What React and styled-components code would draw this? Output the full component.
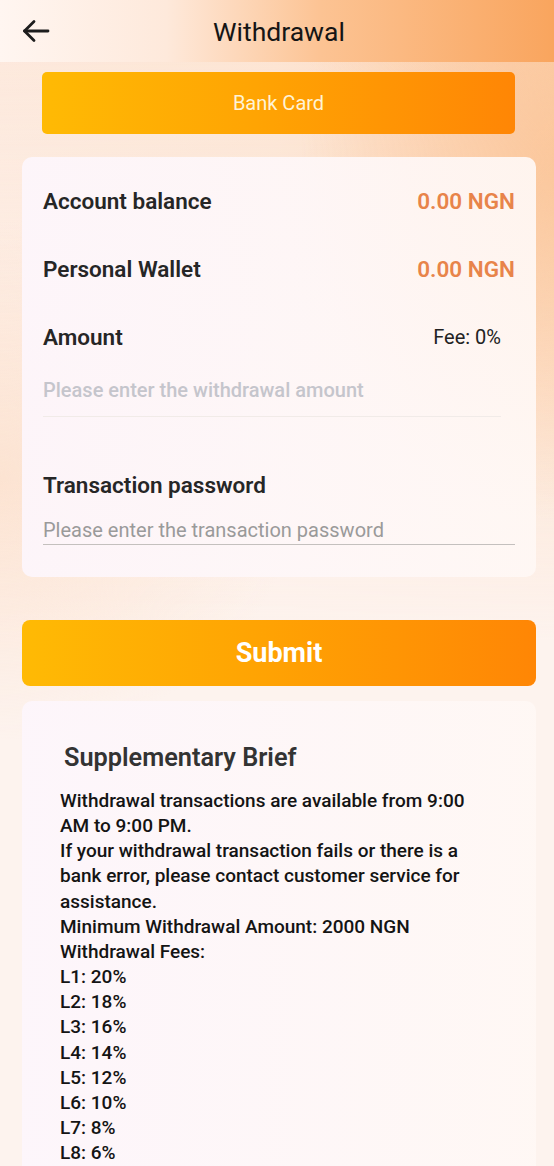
import React from 'react';
import styled, { createGlobalStyle } from 'styled-components';

const GlobalStyle = createGlobalStyle`
  * { box-sizing: border-box; }
  html, body {
    margin: 0;
    padding: 0;
  }
  body {
    font-family: Roboto, "Liberation Sans", Arial, sans-serif;
    background-color: #fdf1ea;
  }
`;

const Page = styled.div`
  width: 554px;
  min-height: 1166px;
  overflow: hidden;
  background:
    radial-gradient(ellipse 260px 360px at 560px 160px, rgba(251, 196, 150, 0.85), rgba(251, 196, 150, 0) 100%),
    radial-gradient(ellipse 300px 260px at 0px 480px, rgba(252, 222, 200, 0.7), rgba(252, 222, 200, 0) 100%),
    linear-gradient(180deg, rgba(253, 242, 235, 0) 0px, #fdf3ee 640px),
    linear-gradient(90deg, #fde8db 0%, #fde3d0 50%, #fcd0ad 100%);
`;

const Header = styled.header`
  height: 62px;
  display: flex;
  align-items: center;
  justify-content: center;
  position: relative;
  background: linear-gradient(90deg, #fff6f1 0%, #fee9db 30%, #fcc393 58%, #f9a55e 100%);
`;

const BackButton = styled.button`
  position: absolute;
  left: 20px;
  top: 15px;
  width: 32px;
  height: 32px;
  padding: 0;
  border: none;
  background: none;
  display: flex;
  align-items: center;
  justify-content: center;
`;

const Title = styled.h1`
  margin: 0;
  font-size: 26.5px;
  font-weight: 400;
  color: #151515;
  padding-left: 4px;
`;

const GradientButton = styled.button`
  display: flex;
  align-items: center;
  justify-content: center;
  border: none;
  font-family: inherit;
  color: ${p => (p.$light ? '#fff3d6' : '#ffffff')};
  font-size: ${p => (p.$big ? '27px' : '20px')};
  font-weight: ${p => (p.$big ? 700 : 400)};
  height: ${p => p.$h}px;
  border-radius: ${p => p.$r}px;
  background: linear-gradient(90deg, #ffba04 0%, #ffa403 45%, #ff8605 100%);
`;

const TabButton = styled(GradientButton)`
  margin: 10px 39px 0 42px;
  width: 473px;
`;

const SubmitButton = styled(GradientButton)`
  margin: 43px 0 0 22px;
  width: 514px;
`;

const Card = styled.section`
  margin: ${p => p.$top}px 0 0 22px;
  width: 514px;
  border-radius: 10px;
  background: linear-gradient(90deg, rgba(253, 246, 252, 0.92) 0%, rgba(255, 248, 245, 0.92) 100%);
`;

const FormCard = styled(Card)`
  padding: 10px 21px 32px 21px;
`;

const Row = styled.div`
  height: ${p => p.$h || 68}px;
  display: flex;
  align-items: center;
  justify-content: space-between;
  padding-right: ${p => p.$pr || 0}px;
`;

const Label = styled.span`
  font-size: 22.5px;
  font-weight: 600;
  color: #262626;
`;

const Value = styled.span`
  font-size: 22.5px;
  font-weight: 600;
  color: #e8844a;
`;

const Fee = styled.span`
  font-size: 20px;
  color: #222;
`;

const Input = styled.input`
  display: block;
  width: ${p => p.$w}px;
  height: ${p => p.$h}px;
  margin-top: ${p => p.$mt || 0}px;
  padding: 0 0 ${p => p.$pb || 0}px 0;
  border: none;
  border-bottom: 1px solid ${p => p.$line};
  background: transparent;
  font-family: inherit;
  font-size: 20px;
  font-weight: ${p => p.$weight || 400};
  outline: none;
  &::placeholder {
    color: ${p => p.$ph};
    opacity: 1;
  }
`;

const PasswordLabel = styled(Row)`
  margin-top: 51px;
  height: 34px;
`;

const BriefCard = styled(Card)`
  padding: 41px 60px 30px 38px;
`;

const BriefTitle = styled.h2`
  margin: 0 0 14px 4px;
  font-size: 25.3px;
  line-height: 32px;
  font-weight: 600;
  color: #333;
`;

const BriefText = styled.p`
  margin: 0;
  font-size: 19px;
  line-height: 25.15px;
  font-weight: 500;
  color: #141414;
`;

const BackIcon = () => (
  <svg width="30" height="30" viewBox="0 0 30 30" fill="none" stroke="#1d1d1d" strokeWidth="2.8" strokeLinecap="round" strokeLinejoin="round">
    <path d="M27 15H3.5" />
    <path d="M13 5.5L3.5 15L13 24.5" />
  </svg>
);

const fees = ['L1: 20%', 'L2: 18%', 'L3: 16%', 'L4: 14%', 'L5: 12%', 'L6: 10%', 'L7: 8%', 'L8: 6%'];

export default function App() {
  return (
    <Page>
      <GlobalStyle />
      <Header>
        <BackButton aria-label="back"><BackIcon /></BackButton>
        <Title>Withdrawal</Title>
      </Header>

      <TabButton $h={62} $r={5} $light>Bank Card</TabButton>

      <FormCard $top={23}>
        <Row>
          <Label>Account balance</Label>
          <Value>0.00 NGN</Value>
        </Row>
        <Row>
          <Label>Personal Wallet</Label>
          <Value>0.00 NGN</Value>
        </Row>
        <Row $pr={14}>
          <Label>Amount</Label>
          <Fee>Fee: 0%</Fee>
        </Row>
        <Input
          placeholder="Please enter the withdrawal amount"
          $w={458}
          $h={46}
          $pb={8}
          $weight={500}
          $line="#f1ebe8"
          $ph="#c5c5cc"
        />
        <PasswordLabel>
          <Label>Transaction password</Label>
        </PasswordLabel>
        <Input
          type="password"
          placeholder="Please enter the transaction password"
          $w={472}
          $h={30}
          $mt={13}
          $line="#c4c0be"
          $ph="#9a9a9a"
        />
      </FormCard>

      <SubmitButton $h={66} $r={8} $big>Submit</SubmitButton>

      <BriefCard $top={15}>
        <BriefTitle>Supplementary Brief</BriefTitle>
        <BriefText>Withdrawal transactions are available from 9:00 AM to 9:00 PM.</BriefText>
        <BriefText>If your withdrawal transaction fails or there is a bank error, please contact customer service for assistance.</BriefText>
        <BriefText>Minimum Withdrawal Amount: 2000 NGN</BriefText>
        <BriefText>Withdrawal Fees:</BriefText>
        {fees.map(f => (
          <BriefText key={f}>{f}</BriefText>
        ))}
      </BriefCard>
    </Page>
  );
}
